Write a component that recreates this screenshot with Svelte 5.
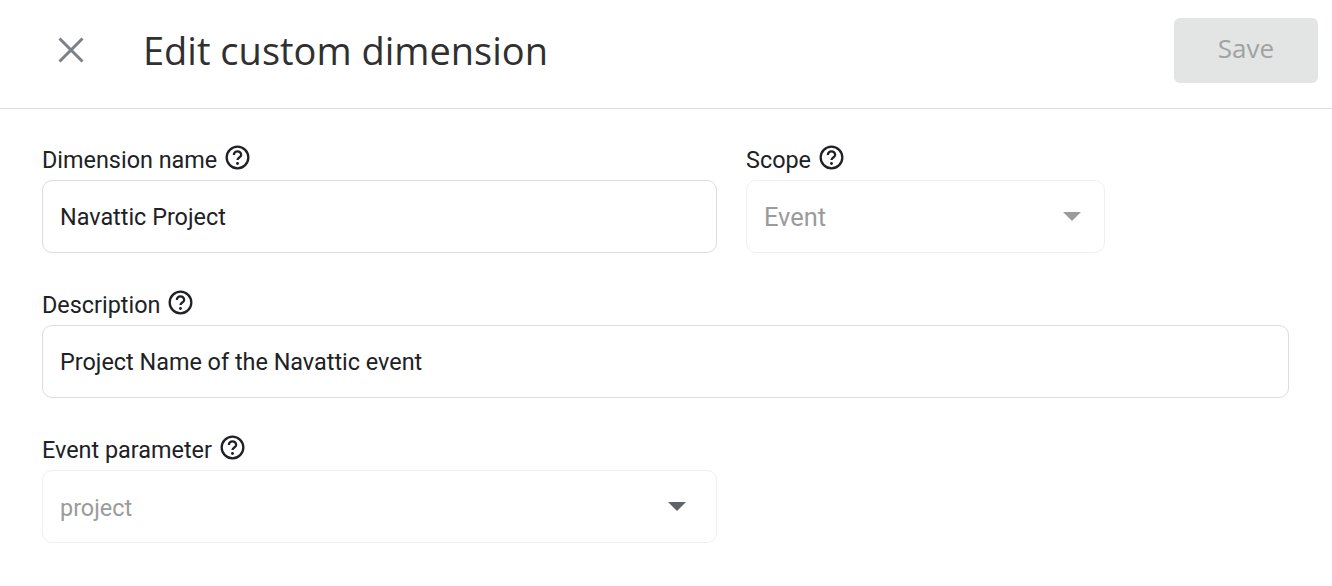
<script lang="ts">
  let saving = $state(false);
</script>

{#snippet help()}
  <svg class="help" viewBox="0 0 24 24" fill="none" stroke="currentColor" stroke-width="2.2" stroke-linecap="round">
    <circle cx="12" cy="12" r="10.4" />
    <path d="M8.5 9.6a3.5 3.5 0 0 1 7 0c0 2.4-3.5 2.5-3.5 4.8" stroke-linecap="butt" />
    <circle cx="12" cy="17.7" r="1.4" fill="currentColor" stroke="none" />
  </svg>
{/snippet}

{#snippet caret()}
  <svg class="caret" viewBox="0 0 18 9"><path d="M0 0h18L9 9z" fill="currentColor" /></svg>
{/snippet}

<div class="page">
  <header class="header">
    <button class="close" aria-label="Close">
      <svg viewBox="0 0 26 26" fill="none" stroke="currentColor" stroke-width="3"><path d="M1.5 1.5l23 23M24.5 1.5l-23 23" /></svg>
    </button>
    <h1 class="title">Edit custom dimension</h1>
    <button class="save" disabled={!saving}>Save</button>
  </header>

  <form class="form">
    <div class="row">
      <div class="field name">
        <div class="label">Dimension name {@render help()}</div>
        <div class="box">Navattic Project</div>
      </div>
      <div class="field scope">
        <div class="label">Scope {@render help()}</div>
        <div class="box disabled select large">Event <span class="arrow light">{@render caret()}</span></div>
      </div>
    </div>
    <div class="field desc">
      <div class="label">Description {@render help()}</div>
      <div class="box">Project Name of the Navattic event</div>
    </div>
    <div class="field name">
      <div class="label">Event parameter {@render help()}</div>
      <div class="box disabled select wide-arrow">project <span class="arrow">{@render caret()}</span></div>
    </div>
  </form>
</div>

<style>
  :global(body) {
    margin: 0;
    background: #fff;
    font-family: Roboto, "Liberation Sans", sans-serif;
    color: #202124;
  }

  .page {
    height: 586px;
    overflow: hidden;
  }

  .header {
    display: flex;
    align-items: center;
    height: 109px;
    box-sizing: border-box;
    padding: 0 14px 8px 58px;
    border-bottom: 1px solid #dadce0;
  }

  .close {
    all: unset;
    width: 26px;
    height: 26px;
    color: #7b8186;
  }

  .close svg {
    display: block;
    width: 26px;
    height: 26px;
  }

  .title {
    margin: 0 0 0 59px;
    flex: 1;
    font-family: "Open Sans", Roboto, sans-serif;
    font-size: 38px;
    font-weight: 400;
    color: #303030;
  }

  .save {
    all: unset;
    width: 144px;
    height: 65px;
    box-sizing: border-box;
    margin-top: 1px;
    padding-bottom: 5px;
    border-radius: 6px;
    background: #e3e4e4;
    color: #a0a2a4;
    text-align: center;
    font-family: "Open Sans", Roboto, sans-serif;
    font-size: 26px;
    font-weight: 500;
  }

  .form {
    display: flex;
    flex-direction: column;
    gap: 37px;
    padding: 36px 0 0 42px;
  }

  .row {
    display: flex;
    gap: 29px;
  }

  .field {
    display: flex;
    flex-direction: column;
    gap: 5px;
  }

  .name {
    width: 675px;
  }

  .scope {
    width: 359px;
  }

  .desc {
    width: 1247px;
  }

  .label {
    display: flex;
    align-items: center;
    gap: 8px;
    height: 30px;
    font-size: 23.4px;
    line-height: 30px;
    color: #202124;
  }

  .help {
    width: 25px;
    height: 25px;
    margin-top: -5px;
  }

  .box {
    display: flex;
    align-items: center;
    height: 73px;
    box-sizing: border-box;
    padding: 0 17px;
    border: 1px solid #dadce0;
    border-radius: 10px;
    font-size: 23.4px;
    color: #202124;
  }

  .box.disabled {
    border-color: #eff0f1;
    color: #9a9b9c;
  }

  .select {
    justify-content: space-between;
    padding-right: 23px;
  }

  .large {
    font-size: 25.4px;
  }

  .wide-arrow {
    padding-top: 2px;
    padding-right: 30px;
  }

  .arrow {
    display: flex;
    color: #5f6368;
  }

  .wide-arrow .arrow {
    margin-top: -3px;
  }

  .arrow.light {
    color: #9a9b9c;
  }

  .caret {
    width: 18px;
    height: 9px;
  }
</style>
